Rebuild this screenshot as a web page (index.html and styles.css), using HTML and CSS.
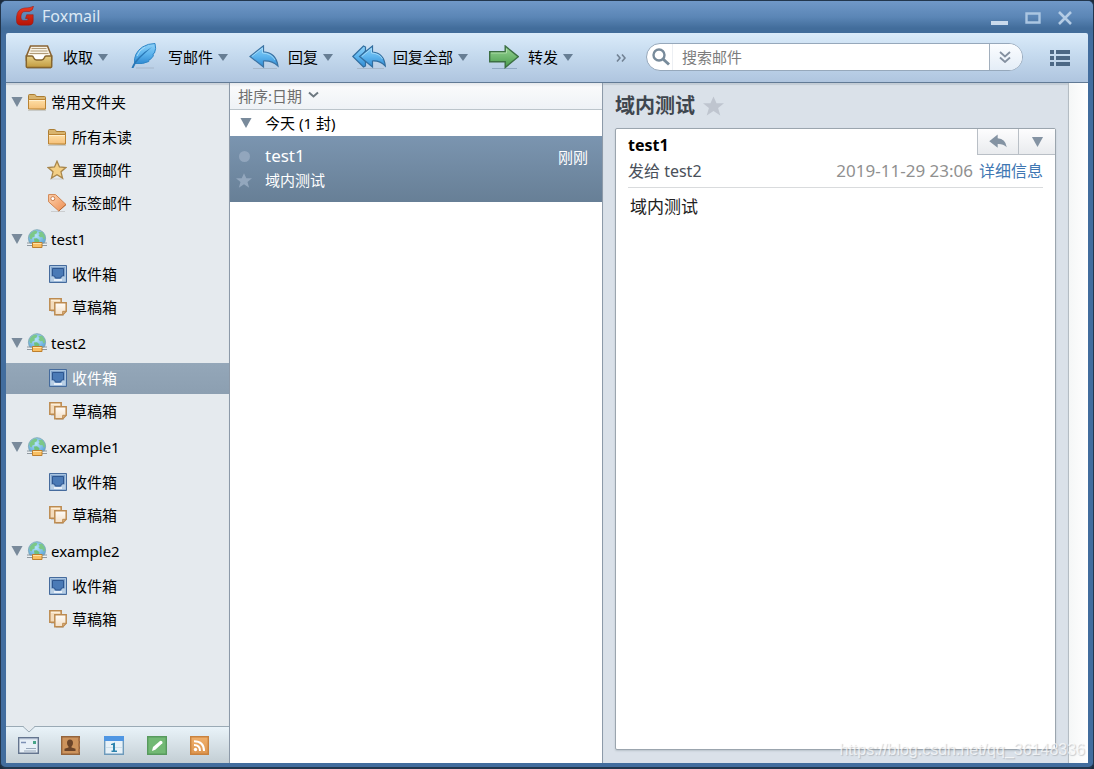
FILE: index.html
```html
<!DOCTYPE html>
<html lang="zh-CN">
<head>
<meta charset="utf-8">
<meta name="viewport" content="width=device-width, initial-scale=1">
<title>Foxmail</title>
<link rel="stylesheet" href="styles.css">
</head>
<body>
<svg class="sprite" width="0" height="0" aria-hidden="true">
  <defs>
    <linearGradient id="blue" x1="0" y1="0" x2="0" y2="1"><stop offset="0" stop-color="#8fd2f8"/><stop offset=".5" stop-color="#5eb5ee"/><stop offset="1" stop-color="#2f8ad2"/></linearGradient>
    <linearGradient id="green" x1="0" y1="0" x2="0" y2="1"><stop offset="0" stop-color="#9bd797"/><stop offset="1" stop-color="#479a4b"/></linearGradient>
    <linearGradient id="gold" x1="0" y1="0" x2="0" y2="1"><stop offset="0" stop-color="#e6cf86"/><stop offset="1" stop-color="#c19a3e"/></linearGradient>
    <linearGradient id="sand" x1="0" y1="0" x2="0" y2="1"><stop offset="0" stop-color="#ffe0a8"/><stop offset="1" stop-color="#f5c078"/></linearGradient>
    <linearGradient id="peach" x1="0" y1="0" x2="1" y2="1"><stop offset="0" stop-color="#ffd3ae"/><stop offset="1" stop-color="#ec8c50"/></linearGradient>
    <linearGradient id="paper" x1="0" y1="0" x2="0" y2="1"><stop offset="0" stop-color="#fffdf9"/><stop offset="1" stop-color="#f3dfc5"/></linearGradient>
    <linearGradient id="rss" x1="0" y1="0" x2="0" y2="1"><stop offset="0" stop-color="#f0b06c"/><stop offset="1" stop-color="#dd9650"/></linearGradient>
    <linearGradient id="red" x1="0" y1="0" x2="0" y2="1"><stop offset="0" stop-color="#ee3b22"/><stop offset="1" stop-color="#b41408"/></linearGradient>
    <radialGradient id="globe" cx=".45" cy=".35" r=".7"><stop offset="0" stop-color="#b5e4fb"/><stop offset="1" stop-color="#4f9bd3"/></radialGradient>
  </defs>
  <symbol id="i-down" viewBox="0 0 10 9"><path d="M0 0h10L5 9z"/></symbol>
  <symbol id="i-folder" viewBox="0 0 20 18">
    <path d="M1 17.500h18" stroke="#b5b5ae" opacity=".6"/>
    <path d="M1.500 15.500V2.500q0-1 1-1h5q1 0 1.300 1l.4 1H17.500q1 0 1 1v11.500z" fill="#d9b46e" stroke="#ab7d33"/>
    <path d="M1.500 6.500h17v9.500h-17z" fill="url(#sand)" stroke="#b98333"/><path d="M2 7.500h16" stroke="#fff0cf"/>
  </symbol>
  <symbol id="i-star" viewBox="0 0 20 20">
    <path d="M3 19h14" stroke="#bbb" opacity=".6"/>
    <path d="M10 1.200l2.500 5.800 6.300.6-4.800 4.200 1.500 6.300L10 14.800l-5.500 3.300L6 11.800 1.200 7.600l6.300-.6z" fill="#f3cf85" stroke="#a8864b" stroke-width="1.300"/>
  </symbol>
  <symbol id="i-tag" viewBox="0 0 20 20">
    <path d="M4 18.500h14" stroke="#bbb" opacity=".6"/>
    <path d="M1.600 1.600H8.500L19 11.500 11.800 18 1.600 8.800z" fill="url(#peach)" stroke="#d08450"/>
    <path d="M19 11.500L11.800 18" stroke="#b96a35"/><circle cx="5.800" cy="5.600" r="2" fill="#fff" stroke="#c97d4d"/>
  </symbol>
  <symbol id="i-globe" viewBox="0 0 20 20">
    <circle cx="10" cy="9.300" r="8.600" fill="url(#globe)" stroke="#7fa9b5" stroke-width=".9"/>
    <path d="M2.300 7Q4 2.500 8.500 1.400l2 1-1 2-2 1 .3 2-2.500 1-.6 2-1.700-.6z" fill="#7cc888"/>
    <path d="M11.500 3l3.500-.3q3 2.800 3 6.500l-1.500 1.500-1-2.700-2.500.2-1.500-2 1.200-1z" fill="#7cc888"/>
    <path d="M7 9.500l3-.3 2.500 2-.5 2.300H7.500z" fill="#6fc07c"/>
    <path d="M1 14.500h18v1.500H1z" fill="#eef2f4"/><path d="M0 14h20M0 16.500h20" stroke="#858f95" stroke-width=".9"/>
    <path d="M5.500 13.500h9.500v5H5.500z" fill="#f9bf62" stroke="#be7f2d"/><path d="M6 14.500h8.500" stroke="#ffe3a5"/>
  </symbol>
  <symbol id="i-inbox" viewBox="0 0 18 18">
    <path d="M.5.5h17v17H.5z" fill="#7fa3cc" stroke="#456b9d"/><path d="M1.500 16.500v-15h15v15" fill="none" stroke="#a9c4e0"/>
    <path d="M3.500 3.500h11v7.500h-2l-1 2h-5l-1-2h-2z" fill="#4a7ab6" stroke="#2e568f"/>
    <path d="M2 11.500h2.500l1.500 2.500h6l1.500-2.500H16v5H2z" fill="#b9cfe5"/><path d="M5 15h8" stroke="#f8fbff" stroke-width="1.500"/>
  </symbol>
  <symbol id="i-draft" viewBox="0 0 18 18">
    <path d="M2 13.500h4M7 17.600h8" stroke="#aaa" opacity=".5"/>
    <path d="M.8.800h11.400v11.400H.8z" fill="#f3dcbd" stroke="#bd8b50" stroke-width="1.500"/><path d="M2 2.300h9" stroke="#fff4e2"/>
    <path d="M5.800 4.800h11.400v8.500l-3.500 3.500H5.800z" fill="url(#paper)" stroke="#bd8b50" stroke-width="1.500"/>
    <path d="M17.200 13.300h-3.500v3.500z" fill="#dbb482" stroke="#bd8b50"/>
  </symbol>
  <symbol id="i-star-flat" viewBox="0 0 22 20"><path d="M11 0l3.200 7H22l-6.200 5 2.300 8L11 15.300 3.900 20l2.300-8L0 7h7.800z"/></symbol>
  <symbol id="i-reply-path" viewBox="0 0 30 24">
    <path d="M1 11.500L14.500.8v6Q27 7.500 29 21 23 15.500 14.500 16v6z"/>
  </symbol>
</svg>

<div class="window">
  <header class="titlebar">
    <svg class="logo" width="18" height="20" viewBox="0 0 18 20" aria-hidden="true">
      <path d="M17.500 0Q17.300 4.500 13.500 5.500H9Q5.500 5.500 5 10v2q0 2.500 2.500 2.500h3.200q1.300 0 1.600-2H9.500l1.200-3.800h6.500v6q0 4.500-4.500 4.500H5q-4.500 0-4.500-4.500V11Q1 3 8.500 2 15 2 17.500 0z" fill="url(#red)" stroke="#9d150c" stroke-width=".5"/>
    </svg>
    <h1 class="app-name">Foxmail</h1>
    <div class="window-controls">
      <button class="wc" aria-label="最小化"><svg width="17" height="14" viewBox="0 0 17 14"><path d="M0 10h17v4H0z" fill="#c9daec"/></svg></button>
      <button class="wc" aria-label="最大化"><svg width="16" height="12" viewBox="0 0 16 12"><path d="M1.500 1.500h13v9h-13z" fill="none" stroke="#abc6e2" stroke-width="2.400"/></svg></button>
      <button class="wc" aria-label="关闭"><svg width="14" height="14" viewBox="0 0 14 14"><path d="M1 1l12 12M13 1L1 13" stroke="#b4cce5" stroke-width="2.600"/></svg></button>
    </div>
  </header>

  <div class="toolbar">
    <div class="tools">
      <button class="tool">
        <span class="tool-icon"><svg width="28" height="24" viewBox="0 0 28 24">
          <path d="M2 23.500h24" stroke="#8b97a5" opacity=".5"/>
          <path d="M5.500 1h17l4 10v4h-25v-4z" fill="#f7f2e5" stroke="#8a6435" stroke-width="1.600"/>
          <path d="M6.500 3.500h15M5.500 6h17M4.500 8.500h19" stroke="#b19b78" stroke-width="1.200"/>
          <path d="M5 10h18v6H5z" fill="#fff"/>
          <path d="M1.300 11h5.700q1 0 1.500 1.500 1 2.500 3 2.500h5q2 0 3-2.500.5-1.500 1.500-1.500h5.700v10.500q0 1-1 1H2.300q-1 0-1-1z" fill="url(#gold)" stroke="#86652d" stroke-width="1.500"/>
        </svg></span>
        <span>收取</span><svg class="caret" width="10" height="7" viewBox="0 0 10 9" preserveAspectRatio="none"><use href="#i-down"/></svg>
      </button>
      <button class="tool">
        <span class="tool-icon quill"><svg width="26" height="26" viewBox="0 0 26 26">
          <path d="M5 25h18" stroke="#8b97a5" opacity=".4"/>
          <path d="M3.500 20.500Q2.500 10 11.500 4q5.500-3.500 12.500-3.500 1.500 5-.5 9.500l-1.500 1 .3 2-3 3.500-1.500.3v1.700Q12 21.500 3.500 20.500z" fill="url(#blue)" stroke="#2f86c6"/>
          <path d="M.5 25Q2.500 19 8 14q6-6 13-10-8 7-12 11-4 4-6.500 10z" fill="#2a78b7"/>
          <path d="M6 13q2-6 8-9" fill="none" stroke="#a9dcf9"/>
        </svg></span>
        <span>写邮件</span><svg class="caret" width="10" height="7" viewBox="0 0 10 9" preserveAspectRatio="none"><use href="#i-down"/></svg>
      </button>
      <button class="tool">
        <span class="tool-icon"><svg width="30" height="24" viewBox="0 0 30 24">
          <path d="M4 23.500h24" stroke="#8b97a5" opacity=".4"/>
          <path d="M1 11.500L14.500.8v6Q27 7.500 29 21 23 15.500 14.500 16v6z" fill="url(#blue)" stroke="#3c73a3" stroke-width="1.200"/>
          <path d="M3 11.300L13.500 3v5q9 .5 12.500 7" fill="none" stroke="#a9defb" stroke-width=".8"/>
        </svg></span>
        <span>回复</span><svg class="caret" width="10" height="7" viewBox="0 0 10 9" preserveAspectRatio="none"><use href="#i-down"/></svg>
      </button>
      <button class="tool">
        <span class="tool-icon"><svg width="34" height="24" viewBox="0 0 34 24">
          <path d="M5 23.500h27" stroke="#8b97a5" opacity=".4"/>
          <path d="M.8 11.500L11.500 1l2 1v4L9 11.500l4.500 5V21l-2 1z" fill="url(#blue)" stroke="#326e9f" stroke-width="1.200"/>
          <path d="M7.500 11.500L20.500 1v6Q32 8 33.300 21 28 15.500 20.500 16v6z" fill="url(#blue)" stroke="#326e9f" stroke-width="1.200"/>
          <path d="M10 11.300L19.500 3.300V8q8 .5 11 6" fill="none" stroke="#a9defb" stroke-width=".8"/>
        </svg></span>
        <span>回复全部</span><svg class="caret" width="10" height="7" viewBox="0 0 10 9" preserveAspectRatio="none"><use href="#i-down"/></svg>
      </button>
      <button class="tool">
        <span class="tool-icon"><svg width="30" height="24" viewBox="0 0 30 24">
          <path d="M3 23.500h25" stroke="#6b87a5" opacity=".5"/>
          <path d="M.7 6.700h15.500V1L29.300 11.700 16.200 22.500v-5.800H.7z" fill="url(#green)" stroke="#3c6f43" stroke-width="1.400"/>
          <path d="M2 8h15.500V4" fill="none" stroke="#b5e3b0" stroke-width=".8"/>
        </svg></span>
        <span>转发</span><svg class="caret" width="10" height="7" viewBox="0 0 10 9" preserveAspectRatio="none"><use href="#i-down"/></svg>
      </button>
    </div>
    <button class="more" aria-label="更多"><svg width="10" height="8" viewBox="0 0 10 8"><path d="M1 .5l3 3.500-3 3.500M6 .5L9 4 6 7.500" fill="none" stroke="#728294" stroke-width="1.600"/></svg></button>
    <form class="search" role="search">
      <label class="search-icon" for="q" aria-label="搜索邮件"><svg width="18" height="18" viewBox="0 0 18 18"><circle cx="7" cy="7" r="5.500" fill="none" stroke="#788b9b" stroke-width="2.400"/><path d="M11 11l6 5.500" stroke="#788b9b" stroke-width="3"/></svg></label>
      <input id="q" class="search-input" type="search" placeholder="搜索邮件">
      <button class="search-options" type="button" aria-label="搜索选项"><svg width="12" height="12" viewBox="0 0 12 12"><path d="M1 1l5 4.500L11 1M1 6.500L6 11l5-4.500" fill="none" stroke="#8490a0" stroke-width="1.800"/></svg></button>
    </form>
    <button class="menu" aria-label="菜单"><svg width="20" height="16" viewBox="0 0 20 16"><path d="M0 0h4v4H0zM6 0h14v4H6zM0 6h4v4H0zM6 6h14v4H6zM0 12h4v4H0zM6 12h14v4H6z" fill="#4c6885"/></svg></button>
  </div>

  <main class="content">
    <aside class="sidebar">
      <nav class="tree" aria-label="文件夹">
        <section>
          <button class="account"><svg class="twist" width="12" height="10"><use href="#i-down"/></svg><svg width="20" height="18"><use href="#i-folder"/></svg><span>常用文件夹</span></button>
          <button class="folder"><span class="fi"><svg width="20" height="18"><use href="#i-folder"/></svg></span>所有未读</button>
          <button class="folder"><span class="fi"><svg width="20" height="20"><use href="#i-star"/></svg></span>置顶邮件</button>
          <button class="folder"><span class="fi"><svg width="20" height="20"><use href="#i-tag"/></svg></span>标签邮件</button>
        </section>
        <section>
          <button class="account"><svg class="twist" width="12" height="10"><use href="#i-down"/></svg><svg width="20" height="20"><use href="#i-globe"/></svg><span>test1</span></button>
          <button class="folder"><span class="fi"><svg width="18" height="18"><use href="#i-inbox"/></svg></span>收件箱</button>
          <button class="folder"><span class="fi"><svg width="18" height="18"><use href="#i-draft"/></svg></span>草稿箱</button>
        </section>
        <section>
          <button class="account"><svg class="twist" width="12" height="10"><use href="#i-down"/></svg><svg width="20" height="20"><use href="#i-globe"/></svg><span>test2</span></button>
          <button class="folder selected" aria-current="true"><span class="fi"><svg width="18" height="18"><use href="#i-inbox"/></svg></span>收件箱</button>
          <button class="folder"><span class="fi"><svg width="18" height="18"><use href="#i-draft"/></svg></span>草稿箱</button>
        </section>
        <section>
          <button class="account"><svg class="twist" width="12" height="10"><use href="#i-down"/></svg><svg width="20" height="20"><use href="#i-globe"/></svg><span>example1</span></button>
          <button class="folder"><span class="fi"><svg width="18" height="18"><use href="#i-inbox"/></svg></span>收件箱</button>
          <button class="folder"><span class="fi"><svg width="18" height="18"><use href="#i-draft"/></svg></span>草稿箱</button>
        </section>
        <section>
          <button class="account"><svg class="twist" width="12" height="10"><use href="#i-down"/></svg><svg width="20" height="20"><use href="#i-globe"/></svg><span>example2</span></button>
          <button class="folder"><span class="fi"><svg width="18" height="18"><use href="#i-inbox"/></svg></span>收件箱</button>
          <button class="folder"><span class="fi"><svg width="18" height="18"><use href="#i-draft"/></svg></span>草稿箱</button>
        </section>
      </nav>
      <div class="modules">
        <svg class="notch" width="12" height="7" viewBox="0 0 12 7"><path d="M0 0h12L6 5.500z" fill="#e5eaee"/><path d="M0 .5L6 6l6-5.500" fill="none" stroke="#9aaab5"/></svg>
        <button class="module" aria-label="邮件"><svg width="21" height="18" viewBox="0 0 21 18">
          <path d="M.7.700h19.600v15.600H.7z" fill="#e8f0f7" stroke="#64758f" stroke-width="1.400"/><path d="M1.500 1.800h18" stroke="#a8b7cc"/>
          <path d="M3 5.500h5" stroke="#7e91b4" stroke-width="1.500"/><path d="M15 4h3v3h-3z" fill="#47a487"/><path d="M8 11.500h10M6 14h12" stroke="#98a8bb"/></svg></button>
        <button class="module" aria-label="联系人"><svg width="20" height="20" viewBox="0 0 20 20">
          <path d="M.7.700h17.600v17.600H.7z" fill="#cd935c" stroke="#94643c" stroke-width="1.400"/><path d="M17 2h2v3h-2zM17 7.500h2v3h-2zM17 13h2v3h-2z" fill="#ad7346"/>
          <path d="M9 3.500q3 0 3 3.500 0 2-1.500 3.500v1l4 1.200v2.300h-11v-2.300l4-1.200v-1Q6 9 6 7q0-3.500 3-3.500z" fill="#6b4429"/></svg></button>
        <button class="module" aria-label="日历"><svg width="20" height="20" viewBox="0 0 20 20">
          <path d="M.7.700h18.600v17.600H.7z" fill="#e7f1f8" stroke="#6d9abb" stroke-width="1.400"/><path d="M0 0h20v5H0z" fill="#4f96e3"/><path d="M2 11.500h16" stroke="#cedfe9"/>
          <path d="M7 8l4-1.500v8h2V16H7.500v-1.500H9V9H7z" fill="#2d83ad"/></svg></button>
        <button class="module" aria-label="便签"><svg width="20" height="20" viewBox="0 0 20 20">
          <path d="M.7.700h18.600v17.600H.7z" fill="#72b974" stroke="#579a5e" stroke-width="1.400"/>
          <path d="M5 15l1-4 7-6q1-.7 2 .3t.3 2l-7 6.500z" fill="#fff"/></svg></button>
        <button class="module" aria-label="订阅"><svg width="20" height="20" viewBox="0 0 20 20">
          <path d="M.7.700h17.600v17.600H.7z" fill="url(#rss)" stroke="#c9823e" stroke-width="1.400"/>
          <g fill="none" stroke="#fff" stroke-width="2"><path d="M4 9q6 0 6 6M4 5.200q10 0 10 9.800"/></g><circle cx="5.500" cy="13.500" r="1.700" fill="#fff"/></svg></button>
      </div>
    </aside>

    <section class="list">
      <button class="sort">排序:日期 <svg width="11" height="10" viewBox="0 0 11 10"><path d="M1 1.500l4.500 4L10 1.500" fill="none" stroke="#6d7880" stroke-width="2"/></svg></button>
      <button class="day"><svg class="twist" width="12" height="10"><use href="#i-down"/></svg>今天 (1 封)</button>
      <article class="mail">
        <div class="marks">
          <span class="dot"></span>
          <svg class="pin" width="16" height="15"><use href="#i-star-flat"/></svg>
        </div>
        <div class="summary"><span class="from">test1</span><span class="subject">域内测试</span></div>
        <time class="when">刚刚</time>
      </article>
    </section>

    <section class="reader">
      <div class="pane">
        <div class="heading"><h2 class="title">域内测试</h2><button class="fav" aria-label="星标"><svg width="21" height="20"><use href="#i-star-flat"/></svg></button></div>
        <article class="message">
          <div class="quick">
            <button class="q" aria-label="回复"><svg width="20" height="15"><use href="#i-reply-path"/></svg></button>
            <button class="q" aria-label="更多操作"><svg width="13" height="10"><use href="#i-down"/></svg></button>
          </div>
          <header class="meta">
            <div class="sender">test1</div>
            <div class="line"><span class="to">发给 test2</span><time class="date">2019-11-29 23:06</time><a class="details" href="#details">详细信息</a></div>
          </header>
          <p class="body">域内测试</p>
        </article>
      </div>
      <div class="track"></div>
    </section>
  </main>
  <div class="watermark">https://blog.csdn.net/qq_36148336</div>
</div>
</body>
</html>
```
FILE: styles.css
```css
* { box-sizing: border-box; }

body {
  margin: 0;
  background: #1d2b3c;
  color: #000;
  font: 15px/20px "Noto Sans", "Noto Sans CJK SC", sans-serif;
}

button {
  display: flex;
  align-items: center;
  padding: 0;
  border: 0;
  background: none;
  color: inherit;
  font: inherit;
}

svg { display: block; flex: none; }
.sprite { position: absolute; }

.window {
  position: relative;
  display: flex;
  flex-direction: column;
  min-height: 100vh;
  padding: 0 5px 4px;
  border: 1px solid #22364d;
  border-bottom-width: 2px;
  border-radius: 6px;
  background: #426d9e;
}

.titlebar {
  display: flex;
  align-items: center;
  height: 32px;
  margin: 0 -5px;
  padding: 0 21px 2px 15px;
  border-radius: 5px 5px 0 0;
  background: linear-gradient(#7098c8, #5b86b6 50%, #426d9b 85%);
}
.app-name {
  margin: 0 auto 0 8px;
  color: #dce8f4;
  font-size: 16px;
  font-weight: 400;
}
.window-controls { display: flex; align-items: center; gap: 17px; padding-top: 4px; }

.toolbar {
  display: flex;
  align-items: center;
  height: 50px;
  padding: 0 18px 2px 15px;
  border-bottom: 1px solid #617a95;
  border-radius: 2px 2px 0 0;
  background: linear-gradient(#daebfa, #c5daee 45%, #afc5df);
}
.tools { display: flex; gap: 18px; }
.tool { height: 36px; white-space: nowrap; }
.tool-icon { display: flex; justify-content: center; width: 36px; margin-right: 6px; }
.quill { padding-bottom: 2px; }
.caret { margin-top: 2px; margin-left: 5px; fill: #677e94; }
.more { margin: 2px 20px 0 43px; }

.search {
  display: flex;
  flex: 1;
  height: 28px;
  overflow: hidden;
  border: 1px solid #96a8bb;
  border-radius: 14px;
  background: #fff;
}
.search-icon {
  display: flex;
  align-items: center;
  width: 26px;
  padding-left: 5px;
  border-right: 1px solid #eceff3;
}
.search-input {
  flex: 1;
  min-width: 0;
  padding: 0 9px;
  border: 0;
  outline: 0;
  background: none;
  font: inherit;
}
.search-input::placeholder { color: #7c7c7c; opacity: 1; }
.search-options {
  justify-content: center;
  width: 33px;
  padding-right: 3px;
  border-left: 1px solid #a2afbd;
  background: linear-gradient(#fbfdff, #e4edf7);
}
.menu { margin-top: 2px; margin-left: 27px; }

.content {
  display: grid;
  flex: 1;
  grid-template-columns: 224px 373px minmax(0, 1fr);
  background: #fff;
  box-shadow: inset 0 2px 1px #c3ccd5;
}

.sidebar {
  display: flex;
  flex-direction: column;
  border-right: 1px solid #8d9aa9;
  background: #e5eaee;
  box-shadow: inset 0 2px 1px #ccd3da;
}
.tree { flex: 1; padding-top: 1px; }
.account {
  gap: 4px;
  width: 100%;
  height: 38px;
  padding: 0 0 2px 5px;
}
.twist { fill: #798a9b; }
.folder {
  width: 100%;
  height: 31px;
  margin-bottom: 2px;
  padding: 0 0 2px 41px;
}
.fi { display: flex; justify-content: flex-end; width: 20px; margin-right: 5px; }
.selected {
  background: linear-gradient(#94a7b9, #8c9fb1);
  color: #fff;
}
.modules {
  position: relative;
  display: flex;
  align-items: center;
  gap: 23px;
  height: 37px;
  padding: 2px 0 0 12px;
  border-top: 1px solid #9aaab5;
  background: linear-gradient(#e9f3f9, #c3ced4);
}
.module { justify-content: center; width: 20px; }
.notch { position: absolute; top: -1px; left: 17px; }

.list { border-right: 1px solid #8d9aa9; }
.sort {
  gap: 6px;
  width: 100%;
  height: 27px;
  padding-left: 8px;
  border-bottom: 1px solid #bcc5cb;
  background: linear-gradient(#e5e8eb, #f9fafb 4px, #eef2f6);
  color: #6e6e6e;
}
.day {
  gap: 13px;
  width: 100%;
  height: 26px;
  padding-left: 10px;
}
.mail {
  display: flex;
  height: 66px;
  padding: 10px 14px 10px 6px;
  background: linear-gradient(#7b95b0, #677f96);
  color: #fff;
}
.marks {
  display: flex;
  flex-direction: column;
  align-items: center;
  gap: 11px;
  width: 16px;
  padding-top: 5px;
}
.dot { width: 11px; height: 11px; border-radius: 50%; background: #92a6bd; }
.pin { fill: #93a7bd; }
.summary {
  display: flex;
  flex: 1;
  flex-direction: column;
  gap: 4px;
  padding-left: 13px;
}
.from { font-size: 17px; }
.when { padding-top: 1px; }

.reader { display: flex; }
.pane {
  display: flex;
  flex: 1;
  flex-direction: column;
  padding: 1px 12px 13px;
  border-right: 1px solid #b4bcc3;
  background: #dae1e9;
  box-shadow: inset 0 2px 1px #c3ccd5;
}
.heading {
  display: flex;
  align-items: center;
  gap: 8px;
  height: 44px;
}
.title { margin: 0; color: #3f464e; font-size: 20px; line-height: 26px; }
.fav { fill: #bfc5cf; }
.message {
  position: relative;
  flex: 1;
  padding: 6px 12px 0;
  border: 1px solid #9ba5ae;
  border-radius: 2px;
  background: #fff;
  box-shadow: 0 1px 2px #b9c2ca;
}
.quick {
  position: absolute;
  top: 0;
  right: 0;
  display: flex;
  border-bottom: 1px solid #b9bfc6;
  background: linear-gradient(#fdfdfe, #e9ebee);
}
.q {
  justify-content: center;
  width: 37px;
  height: 25px;
  border-left: 1px solid #b9bfc6;
  fill: #8493a3;
}
.q:first-child { width: 41px; }
.meta {
  padding-bottom: 6px;
  border-bottom: 1px solid #d9dbdd;
  font-size: 16px;
}
.sender { font-weight: 700; }
.line { display: flex; gap: 6px; padding-top: 6px; }
.to { color: #4a505a; }
.date { margin-left: auto; color: #909090; font-size: 17px; }
.details { color: #3f77b3; text-decoration: none; }
.body { margin: 9px 2px; color: #222; font-size: 17px; }
.track { width: 19px; background: linear-gradient(90deg, #f5f7f7, #fff); }

.watermark {
  position: absolute;
  right: 8px;
  bottom: 7px;
  color: rgba(255, 255, 255, .7);
  font: 16px/20px "Liberation Sans", sans-serif;
  text-shadow: 1px 1px 1px rgba(130, 135, 140, .4);
  pointer-events: none;
}
```
